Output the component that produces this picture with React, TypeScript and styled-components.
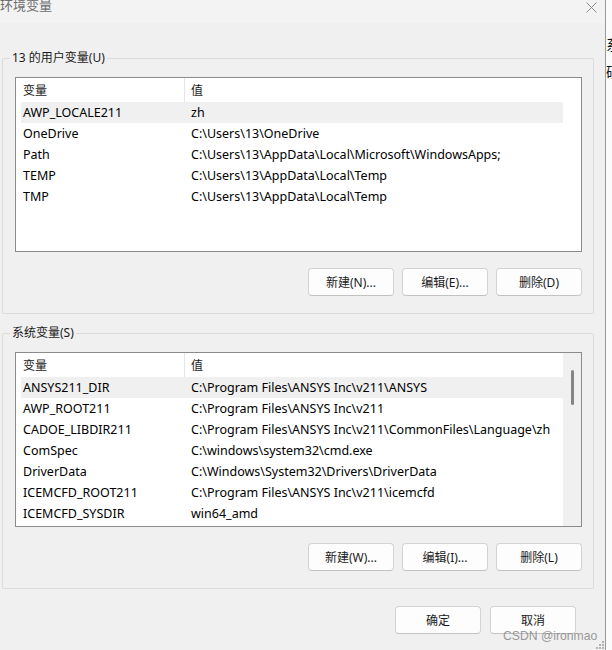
import React from "react";
import styled, { createGlobalStyle } from "styled-components";

type EnvVar = { name: string; value: string };

const userVars: EnvVar[] = [
    { name: "AWP_LOCALE211", value: "zh" },
    { name: "OneDrive", value: "C:\\Users\\13\\OneDrive" },
    { name: "Path", value: "C:\\Users\\13\\AppData\\Local\\Microsoft\\WindowsApps;" },
    { name: "TEMP", value: "C:\\Users\\13\\AppData\\Local\\Temp" },
    { name: "TMP", value: "C:\\Users\\13\\AppData\\Local\\Temp" },
];

const systemVars: EnvVar[] = [
    { name: "ANSYS211_DIR", value: "C:\\Program Files\\ANSYS Inc\\v211\\ANSYS" },
    { name: "AWP_ROOT211", value: "C:\\Program Files\\ANSYS Inc\\v211" },
    { name: "CADOE_LIBDIR211", value: "C:\\Program Files\\ANSYS Inc\\v211\\CommonFiles\\Language\\zh" },
    { name: "ComSpec", value: "C:\\windows\\system32\\cmd.exe" },
    { name: "DriverData", value: "C:\\Windows\\System32\\Drivers\\DriverData" },
    { name: "ICEMCFD_ROOT211", value: "C:\\Program Files\\ANSYS Inc\\v211\\icemcfd" },
    { name: "ICEMCFD_SYSDIR", value: "win64_amd" },
];

type GroupProps = {
    label: string;
    vars: EnvVar[];
    buttons: string[];
    scroll?: boolean;
};

const VarGroup = ({ label, vars, buttons, scroll }: GroupProps) => (
    <Group>
        <Legend>{label}</Legend>
        <ListBox>
            <Table>
                <HeaderRow>
                    <HeaderCell $divider>变量</HeaderCell>
                    <HeaderCell>值</HeaderCell>
                </HeaderRow>
                {vars.map((v, i) => (
                    <Row key={v.name} $selected={i === 0}>
                        <NameCell>{v.name}</NameCell>
                        <ValueCell>{v.value}</ValueCell>
                    </Row>
                ))}
            </Table>
            <Track $visible={!!scroll}>{scroll && <Thumb />}</Track>
        </ListBox>
        <ButtonRow>
            {buttons.map((b) => (
                <Button key={b}>{b}</Button>
            ))}
        </ButtonRow>
    </Group>
);

const App = () => {
    return (
        <>
            <GlobalStyle />
            <Screen>
                <Dialog>
                    <TitleBar>
                        <Title>环境变量</Title>
                        <CloseButton>
                            <svg width="11" height="11" viewBox="0 0 11 11">
                                <path d="M0.5 0.5 L10.5 10.5 M10.5 0.5 L0.5 10.5" stroke="#8c8c8c" strokeWidth="1" />
                            </svg>
                        </CloseButton>
                    </TitleBar>
                    <Body>
                        <VarGroup
                            label="13 的用户变量(U)"
                            vars={userVars}
                            buttons={["新建(N)...", "编辑(E)...", "删除(D)"]}
                        />
                        <VarGroup
                            label="系统变量(S)"
                            vars={systemVars}
                            buttons={["新建(W)...", "编辑(I)...", "删除(L)"]}
                            scroll
                        />
                        <Footer>
                            <Button>确定</Button>
                            <Button>取消</Button>
                        </Footer>
                    </Body>
                    <Watermark>CSDN @ironmao</Watermark>
                    <Grip>
                        <svg width="8" height="8" viewBox="0 0 8 8">
                            <rect x="6" y="0" width="2" height="2" fill="#b4b4b4" />
                            <rect x="3" y="3" width="2" height="2" fill="#b4b4b4" />
                            <rect x="6" y="3" width="2" height="2" fill="#b4b4b4" />
                            <rect x="0" y="6" width="2" height="2" fill="#b4b4b4" />
                            <rect x="3" y="6" width="2" height="2" fill="#b4b4b4" />
                            <rect x="6" y="6" width="2" height="2" fill="#b4b4b4" />
                        </svg>
                    </Grip>
                </Dialog>
                <BackWindow>
                    <BackChar>系</BackChar>
                    <BackChar>硕</BackChar>
                </BackWindow>
            </Screen>
        </>
    );
};

export default App;

const GlobalStyle = createGlobalStyle`
    html, body {
        margin: 0;
        padding: 0;
        background: #f0f0f0;
    }
    body {
        font-family: "Noto Sans", "Noto Sans CJK SC", sans-serif;
        font-size: 12px;
        color: #1a1a1a;
    }
`;

const Screen = styled.div`
    display: flex;
    width: 612px;
    height: 650px;
    overflow: hidden;
`;

const Dialog = styled.div`
    position: relative;
    display: flex;
    flex-direction: column;
    width: 605px;
    height: 650px;
    background: #f0f0f0;
`;

const TitleBar = styled.div`
    display: flex;
    justify-content: space-between;
    align-items: flex-start;
    height: 23px;
    background: #f3f3f3;
`;

const Title = styled.div`
    margin-top: -2px;
    font-size: 13px;
    line-height: 14px;
    color: #6e6e6e;
`;

const CloseButton = styled.div`
    display: flex;
    margin: 2px 8px 0 0;
`;

const Body = styled.div`
    display: flex;
    flex-direction: column;
    gap: 11px;
    padding: 27px 11px 0 2px;
`;

const Group = styled.fieldset`
    margin: 0;
    min-width: 0;
    width: 592px;
    box-sizing: border-box;
    padding: 11px 11px 17px 12px;
    border: 1px solid #dcdcdc;
    border-radius: 2px;
`;

const Legend = styled.legend`
    margin-left: -5px;
    padding: 0 2px;
    font-size: 12px;
    line-height: 16px;
    color: #1a1a1a;
`;

const ListBox = styled.div`
    display: flex;
    width: 567px;
    height: 175px;
    box-sizing: border-box;
    border: 1px solid #8a8b8d;
    background: #ffffff;
    overflow: hidden;
`;

const Table = styled.div`
    flex: 1;
    padding-left: 5px;
    min-width: 0;
`;

const HeaderRow = styled.div`
    display: grid;
    grid-template-columns: 164px 1fr;
    height: 24px;
`;

const HeaderCell = styled.div<{ $divider?: boolean }>`
    box-sizing: border-box;
    padding: 1px 0 0 ${(p) => (p.$divider ? "2px" : "6px")};
    line-height: 23px;
    border-right: ${(p) => (p.$divider ? "1px solid #e5e5e5" : "none")};
    color: #1a1a1a;
`;

const Row = styled.div<{ $selected?: boolean }>`
    display: grid;
    grid-template-columns: 164px 1fr;
    height: 21px;
    box-sizing: border-box;
    padding-top: 1px;
    line-height: 20px;
    font-size: 12.5px;
    background: ${(p) => (p.$selected ? "#f0f0f0" : "transparent")};
    color: #000000;
    white-space: nowrap;
`;

const NameCell = styled.div`
    padding-left: 2px;
    overflow: hidden;
`;

const ValueCell = styled.div`
    padding-left: 6px;
    overflow: hidden;
`;

const Track = styled.div<{ $visible: boolean }>`
    flex: 0 0 18px;
    background: ${(p) => (p.$visible ? "#f0f0f0" : "#ffffff")};
`;

const Thumb = styled.div`
    width: 3px;
    height: 35px;
    margin: 17px 0 0 8px;
    border-radius: 2px;
    background: #858585;
`;

const ButtonRow = styled.div`
    display: flex;
    justify-content: flex-end;
    gap: 8px;
    margin-top: 16px;
    width: 567px;
`;

const Button = styled.div`
    display: flex;
    align-items: center;
    justify-content: center;
    width: 86px;
    height: 28px;
    box-sizing: border-box;
    border: 1px solid #d3d3d3;
    border-bottom-color: #c2c2c2;
    border-radius: 4px;
    background: #fdfdfd;
    font-size: 12px;
    color: #1a1a1a;
`;

const Footer = styled.div`
    display: flex;
    justify-content: flex-end;
    gap: 9px;
    margin-top: 6px;
    padding-right: 18px;
`;

const Watermark = styled.div`
    position: absolute;
    left: 503px;
    top: 628px;
    font-family: "Liberation Sans", Arial, sans-serif;
    font-size: 12.2px;
    line-height: 16px;
    white-space: nowrap;
    color: rgba(120, 120, 120, 0.75);
    pointer-events: none;
`;

const Grip = styled.div`
    position: absolute;
    right: 1px;
    bottom: 1px;
    display: flex;
`;

const BackWindow = styled.div`
    display: flex;
    flex-direction: column;
    gap: 13px;
    flex: 0 0 7px;
    box-sizing: border-box;
    padding-top: 37px;
    border-left: 1px solid #9a9a9a;
    background: #fbfbfb;
    overflow: hidden;
`;

const BackChar = styled.div`
    font-family: "Noto Sans CJK SC", sans-serif;
    font-size: 14px;
    line-height: 14px;
    color: #111111;
    white-space: nowrap;
`;
